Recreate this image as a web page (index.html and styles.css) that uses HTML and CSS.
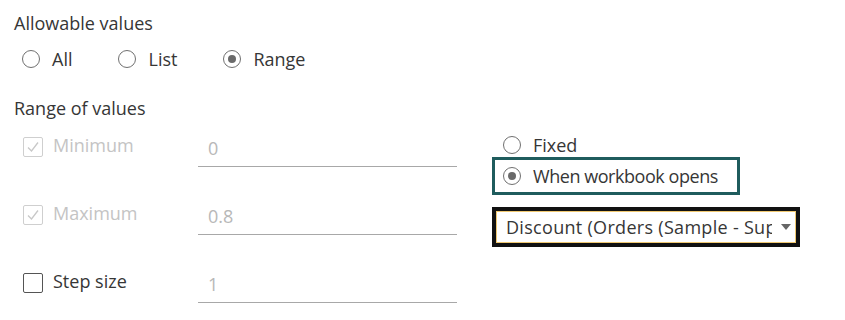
FILE: index.html
```html
<!DOCTYPE html>
<html>
<head>
<meta charset="utf-8">
<link rel="stylesheet" href="styles.css">
</head>
<body>
<div class="page">
  <div class="title">Allowable values</div>
  <div class="radio-row">
    <label class="radio"><span class="circle"></span><span>All</span></label>
    <label class="radio"><span class="circle"></span><span>List</span></label>
    <label class="radio"><span class="circle checked"></span><span>Range</span></label>
  </div>
  <div class="title title-range">Range of values</div>
  <div class="range">
    <div class="fields">
      <div class="field-row">
        <div class="check-label disabled"><span class="box checked"><svg viewBox="0 0 20 20" width="20" height="20"><path d="M5 10.5 L8.5 14 L15 5.5" fill="none" stroke="#c8c8c8" stroke-width="1.3"/></svg></span><span>Minimum</span></div>
        <div class="input">0</div>
      </div>
      <div class="field-row">
        <div class="check-label disabled"><span class="box checked"><svg viewBox="0 0 20 20" width="20" height="20"><path d="M5 10.5 L8.5 14 L15 5.5" fill="none" stroke="#c8c8c8" stroke-width="1.3"/></svg></span><span>Maximum</span></div>
        <div class="input">0.8</div>
      </div>
      <div class="field-row">
        <div class="check-label"><span class="box dark"></span><span>Step size</span></div>
        <div class="input">1</div>
      </div>
    </div>
    <div class="options">
      <label class="radio opt"><span class="circle"></span><span>Fixed</span></label>
      <div class="highlight">
        <label class="radio"><span class="circle checked"></span><span class="when">When workbook opens</span></label>
      </div>
      <div class="select">
        <span class="select-text">Discount (Orders (Sample - Superstore))</span>
        <span class="arrow"></span>
      </div>
    </div>
  </div>
</div>
</body>
</html>
```

FILE: styles.css
```css
* { box-sizing: border-box; }
body {
  margin: 0;
  background: #fff;
  font-family: "Open Sans", Lato, sans-serif;
  color: #363636;
  font-size: 18px;
}
.page {
  padding: 11px 0 0 14px;
}
.title {
  line-height: 24px;
  height: 24px;
  font-size: 18px;
}
.title-range {
  margin-top: 25px;
}
.radio-row {
  margin-top: 12px;
  height: 24px;
  padding-left: 8px;
  display: flex;
  align-items: center;
  gap: 46px;
}
.radio {
  display: flex;
  align-items: center;
  gap: 12px;
  font-size: 18px;
  line-height: 24px;
}
.circle {
  width: 18px;
  height: 18px;
  border-radius: 50%;
  border: 1.5px solid #707070;
  display: flex;
  align-items: center;
  justify-content: center;
  flex: none;
}
.circle.checked::after {
  content: "";
  width: 8px;
  height: 8px;
  border-radius: 50%;
  background: #6a6a6a;
}
.when {
  letter-spacing: -0.45px;
}
.range {
  margin-top: 13px;
  display: flex;
}
.fields {
  display: flex;
  flex-direction: column;
  gap: 34px;
  padding-left: 9px;
}
.field-row {
  display: flex;
  height: 34px;
}
.check-label {
  width: 175px;
  display: flex;
  align-items: flex-start;
  gap: 10px;
  font-size: 18px;
  line-height: 24px;
}
.check-label.disabled { color: #c4c4c4; }
.box {
  width: 20px;
  height: 20px;
  margin-top: 4px;
  border: 1.5px solid #cfcfcf;
  border-radius: 2px;
  flex: none;
  display: flex;
  align-items: center;
  justify-content: center;
}
.box svg { display: block; margin: -1.5px; }
.box.dark { border-color: #555; }
.input {
  width: 259px;
  height: 34px;
  border-bottom: 1.5px solid #a8a8a8;
  padding: 3px 0 0 10px;
  font-size: 18px;
  line-height: 24px;
  color: #b8b8b8;
}
.options {
  margin-left: 35px;
  display: flex;
  flex-direction: column;
}
.opt {
  height: 24px;
  padding-left: 11px;
}
.highlight {
  width: 248px;
  height: 38px;
  border: 3px solid #1f5c5d;
  padding-left: 8px;
  display: flex;
  align-items: center;
}
.select {
  margin-top: 12px;
  width: 308px;
  height: 40px;
  border: 4px solid #111;
  box-shadow: inset 0 0 0 1px #f0c870;
  display: flex;
  align-items: center;
  padding: 0 5px 0 10px;
  gap: 9px;
  font-size: 18px;
  line-height: 24px;
}
.select-text {
  flex: 1;
  white-space: nowrap;
  overflow: hidden;
  letter-spacing: 0.3px;
}
.arrow {
  width: 0;
  height: 0;
  border-left: 5px solid transparent;
  border-right: 5px solid transparent;
  border-top: 6px solid #666;
  flex: none;
}
```
